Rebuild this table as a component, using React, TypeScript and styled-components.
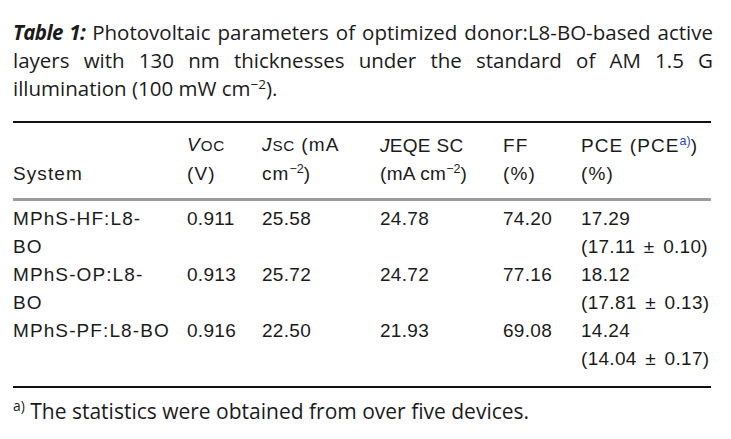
import React from "react";
import styled, { createGlobalStyle } from "styled-components";

const Global = createGlobalStyle`
  html, body { margin: 0; padding: 0; background: #ffffff; }
  body { color: #1b1b1b; }
`;

const Page = styled.div`
  width: 731px;
  height: 439px;
  padding: 18px 20px 0 13px;
  box-sizing: border-box;
  overflow: hidden;
`;

const Caption = styled.div`
  width: 700px;
  font-family: "Open Sans", "Lato", sans-serif;
  font-size: 20.5px;
  line-height: 28px;
  color: #1b1b1b;
`;

const CaptionLine = styled.div<{ $last?: boolean }>`
  text-align: justify;
  text-align-last: ${(p) => (p.$last ? "left" : "justify")};
  white-space: nowrap;
  word-spacing: ${(p) => (p.$last ? "0" : "-1px")};
`;

const Label = styled.span`
  font-weight: 700;
  font-style: italic;
  letter-spacing: -0.6px;
  margin-right: 7px;
`;

const Sup = styled.sup<{ $blue?: boolean }>`
  font-size: 0.66em;
  line-height: 0;
  vertical-align: 0.55em;
  letter-spacing: 0;
  color: ${(p) => (p.$blue ? "#1f46c9" : "inherit")};
`;

const Table = styled.div`
  width: 698px;
  margin-top: 19px;
  border-top: 2px solid #111;
  border-bottom: 2px solid #111;
  font-family: "Liberation Sans", Arial, sans-serif;
  font-size: 19px;
  line-height: 28px;
  color: #1b1b1b;
`;

const Grid = styled.div`
  display: grid;
  grid-template-columns: 174px 75px 118px 123px 78px 1fr;
`;

const Head = styled(Grid)`
  padding: 8px 0 10px;
  border-bottom: 3px solid #9c9c9c;
`;

const Body = styled(Grid)`
  padding: 4px 0 13px;
`;

const Cell = styled.div<{ $num?: boolean }>`
  white-space: nowrap;
  letter-spacing: ${(p) => (p.$num ? "0.3px" : "1.1px")};
`;

const HeadCell = styled(Cell)`
  align-self: end;
`;

const It = styled.span`
  font-style: italic;
`;

const Sub = styled.span`
  font-size: 0.8em;
  letter-spacing: 0.6px;
`;

const Narrow = styled.span`
  letter-spacing: 0.3px;
`;

const PlusMinus = styled.span`
  margin: 0 3px;
`;

const Footnote = styled.div`
  margin-top: 9px;
  font-family: "Open Sans", "Lato", sans-serif;
  font-size: 21px;
  line-height: 28px;
  color: #1b1b1b;
`;

type Row = { system: string[]; voc: string; jsc: string; jeqe: string; ff: string; pce: string; avg: [string, string] };

const rows: Row[] = [
  { system: ["MPhS-HF:L8-", "BO"], voc: "0.911", jsc: "25.58", jeqe: "24.78", ff: "74.20", pce: "17.29", avg: ["17.11", "0.10"] },
  { system: ["MPhS-OP:L8-", "BO"], voc: "0.913", jsc: "25.72", jeqe: "24.72", ff: "77.16", pce: "18.12", avg: ["17.81", "0.13"] },
  { system: ["MPhS-PF:L8-BO"], voc: "0.916", jsc: "22.50", jeqe: "21.93", ff: "69.08", pce: "14.24", avg: ["14.04", "0.17"] },
];

export default function App() {
  return (
    <Page>
      <Global />
      <Caption>
        <CaptionLine>
          <Label>Table 1:</Label>Photovoltaic parameters of optimized donor:L8-BO-based active
        </CaptionLine>
        <CaptionLine>layers with 130 nm thicknesses under the standard of AM 1.5 G</CaptionLine>
        <CaptionLine $last>
          illumination (100 mW cm<Sup>−2</Sup>).
        </CaptionLine>
      </Caption>
      <Table>
        <Head>
          <HeadCell>System</HeadCell>
          <HeadCell>
            <It>V</It>
            <Sub>OC</Sub>
            <br />
            (V)
          </HeadCell>
          <HeadCell>
            <It>J</It>
            <Sub>SC</Sub> (mA
            <br />
            cm<Sup>−2</Sup>)
          </HeadCell>
          <HeadCell>
            <Narrow>
              <It>J</It>EQE SC
            </Narrow>
            <br />
            <Narrow>
              (mA cm<Sup>−2</Sup>)
            </Narrow>
          </HeadCell>
          <HeadCell>
            FF
            <br />
            (%)
          </HeadCell>
          <HeadCell>
            PCE (PCE<Sup $blue>a)</Sup>)
            <br />
            (%)
          </HeadCell>
        </Head>
        <Body>
          {rows.map((r) => (
            <React.Fragment key={r.voc}>
              <Cell>
                {r.system.map((s, i) => (
                  <div key={i}>{s}</div>
                ))}
              </Cell>
              <Cell $num>{r.voc}</Cell>
              <Cell $num>{r.jsc}</Cell>
              <Cell $num>{r.jeqe}</Cell>
              <Cell $num>{r.ff}</Cell>
              <Cell $num>
                <div>{r.pce}</div>
                <div>
                  ({r.avg[0]}
                  <PlusMinus> ± </PlusMinus>
                  {r.avg[1]})
                </div>
              </Cell>
            </React.Fragment>
          ))}
        </Body>
      </Table>
      <Footnote>
        <Sup>a)</Sup> The statistics were obtained from over five devices.
      </Footnote>
    </Page>
  );
}
